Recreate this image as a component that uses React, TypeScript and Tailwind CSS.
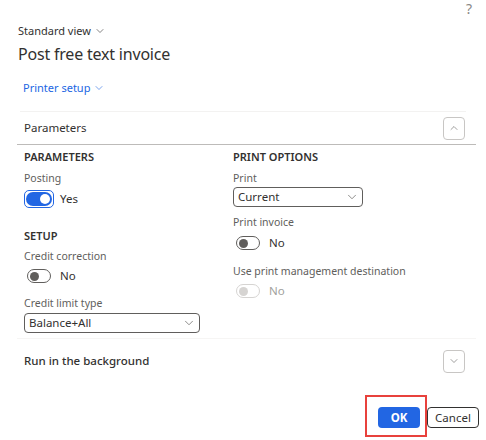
import { ChevronDown, ChevronUp } from 'lucide-react';

function Toggle({ on, disabled, label }: { on?: boolean; disabled?: boolean; label: string }) {
  if (on) {
    return (
      <div className="flex items-center gap-[6px] h-[18px]">
        <div className="rounded-[5px] border border-[#2266e3] p-[1px]">
          <div className="w-[26px] h-[14px] rounded-full bg-[#2266e3] flex items-center justify-end pr-[2px]">
            <div className="w-[10px] h-[10px] rounded-full bg-white" />
          </div>
        </div>
        <span className="text-[11.5px] text-[#323130]">{label}</span>
      </div>
    );
  }
  return (
    <div className="flex items-center gap-[9px] h-[16px] pl-[3px]">
      <div
        className={`w-[24px] h-[14px] rounded-full border flex items-center pl-[2px] ${
          disabled ? 'border-[#d6d4d2]' : 'border-[#605e5c]'
        }`}
      >
        <div className={`w-[9px] h-[9px] rounded-full ${disabled ? 'bg-[#d6d4d2]' : 'bg-[#605e5c]'}`} />
      </div>
      <span className={`text-[11.5px] ${disabled ? 'text-[#a19f9d]' : 'text-[#323130]'}`}>{label}</span>
    </div>
  );
}

function Select({ value, width }: { value: string; width: string }) {
  return (
    <div className={`${width} h-[20px] border border-[#605e5c] rounded-[4px] flex items-center justify-between pl-[4px] pr-[3px]`}>
      <span className="text-[11.5px] text-[#323130]">{value}</span>
      <ChevronDown className="w-[14px] h-[14px] text-[#605e5c]" strokeWidth={1.2} />
    </div>
  );
}

function Label({ children, className = '' }: { children: React.ReactNode; className?: string }) {
  return <div className={`text-[10.5px] text-[#605e5c] leading-[14px] ${className}`}>{children}</div>;
}

function GroupTitle({ children }: { children: React.ReactNode }) {
  return <div className="text-[11px] font-semibold text-[#323130] leading-[14px]">{children}</div>;
}

export default function App() {
  return (
    <div
      className="w-[486px] h-[440px] bg-white relative overflow-hidden text-[#323130]"
      style={{ fontFamily: '"Segoe UI", "Noto Sans", sans-serif' }}
    >
      <div className="absolute right-[14px] top-[-2px] text-[14px] text-[#8a8886]">?</div>

      <div className="pt-[24px] px-[18px]">
        <div className="flex items-center gap-[3px] text-[11px] text-[#323130] leading-[14px]">
          Standard view <ChevronDown className="w-[12px] h-[12px] text-[#323130]" strokeWidth={1.2} />
        </div>
        <div className="text-[16px] tracking-[-0.2px] leading-[22px] mt-[5px] text-[#323130]">Post free text invoice</div>
        <div className="flex items-center gap-[3px] mt-[16px] pl-[5px] text-[11px] text-[#2266e3] leading-[14px]">
          Printer setup <ChevronDown className="w-[12px] h-[12px] text-[#2266e3]" strokeWidth={1.2} />
        </div>
      </div>

      <div className="mt-[16px] mx-[20px] border-t border-[#f3f2f1]" />

      <div className="mx-[17px] w-[459px]">
        <div className="flex items-center justify-between h-[33px] pl-[7px] pr-[11px] border-b border-[#bdbbb9]">
          <span className="text-[11.5px] text-[#323130]">Parameters</span>
          <div className="w-[22px] h-[23px] border border-[#c8c6c4] rounded-[4px] flex items-center justify-center">
            <ChevronUp className="w-[12px] h-[12px] text-[#605e5c]" strokeWidth={1.2} />
          </div>
        </div>

        <div className="grid grid-cols-[209px_1fr] pl-[7px] pt-[5px] pb-[5px] border-b border-[#f6f5f4]">
          <div className="flex flex-col">
            <GroupTitle>PARAMETERS</GroupTitle>
            <Label className="mt-[7px]">Posting</Label>
            <div className="mt-[5px]">
              <Toggle on label="Yes" />
            </div>
            <div className="mt-[21px]">
              <GroupTitle>SETUP</GroupTitle>
            </div>
            <Label className="mt-[6px]">Credit correction</Label>
            <div className="mt-[5px]">
              <Toggle label="No" />
            </div>
            <Label className="mt-[12px]">Credit limit type</Label>
            <div className="mt-[3px]">
              <Select value="Balance+All" width="w-[176px]" />
            </div>
          </div>
          <div className="flex flex-col">
            <GroupTitle>PRINT OPTIONS</GroupTitle>
            <Label className="mt-[7px]">Print</Label>
            <div className="mt-[2px]">
              <Select value="Current" width="w-[130px]" />
            </div>
            <Label className="mt-[8px]">Print invoice</Label>
            <div className="mt-[6px]">
              <Toggle label="No" />
            </div>
            <Label className="mt-[13px]">Use print management destination</Label>
            <div className="mt-[5px]">
              <Toggle disabled label="No" />
            </div>
          </div>
        </div>

        <div className="flex items-center justify-between h-[44px] pl-[7px] pr-[11px]">
          <span className="text-[11.5px] font-medium text-[#323130]">Run in the background</span>
          <div className="w-[22px] h-[23px] border border-[#c8c6c4] rounded-[4px] flex items-center justify-center">
            <ChevronDown className="w-[12px] h-[12px] text-[#605e5c]" strokeWidth={1.2} />
          </div>
        </div>
      </div>

      <div className="flex justify-end items-center pr-[7px] mt-[12px]">
        <div className="border-2 border-[#e8413c] pl-[11px] pr-[5px] pt-[10px] pb-[7px]">
          <div className="w-[42px] h-[21px] rounded-[4px] bg-[#2266e3] flex items-center justify-center text-[11.5px] font-bold text-white">
            OK
          </div>
        </div>
        <div className="w-[52px] h-[21px] mt-[3px] rounded-[4px] border border-[#323130] flex items-center justify-center text-[11.5px] text-[#323130]">
          Cancel
        </div>
      </div>
    </div>
  );
}
